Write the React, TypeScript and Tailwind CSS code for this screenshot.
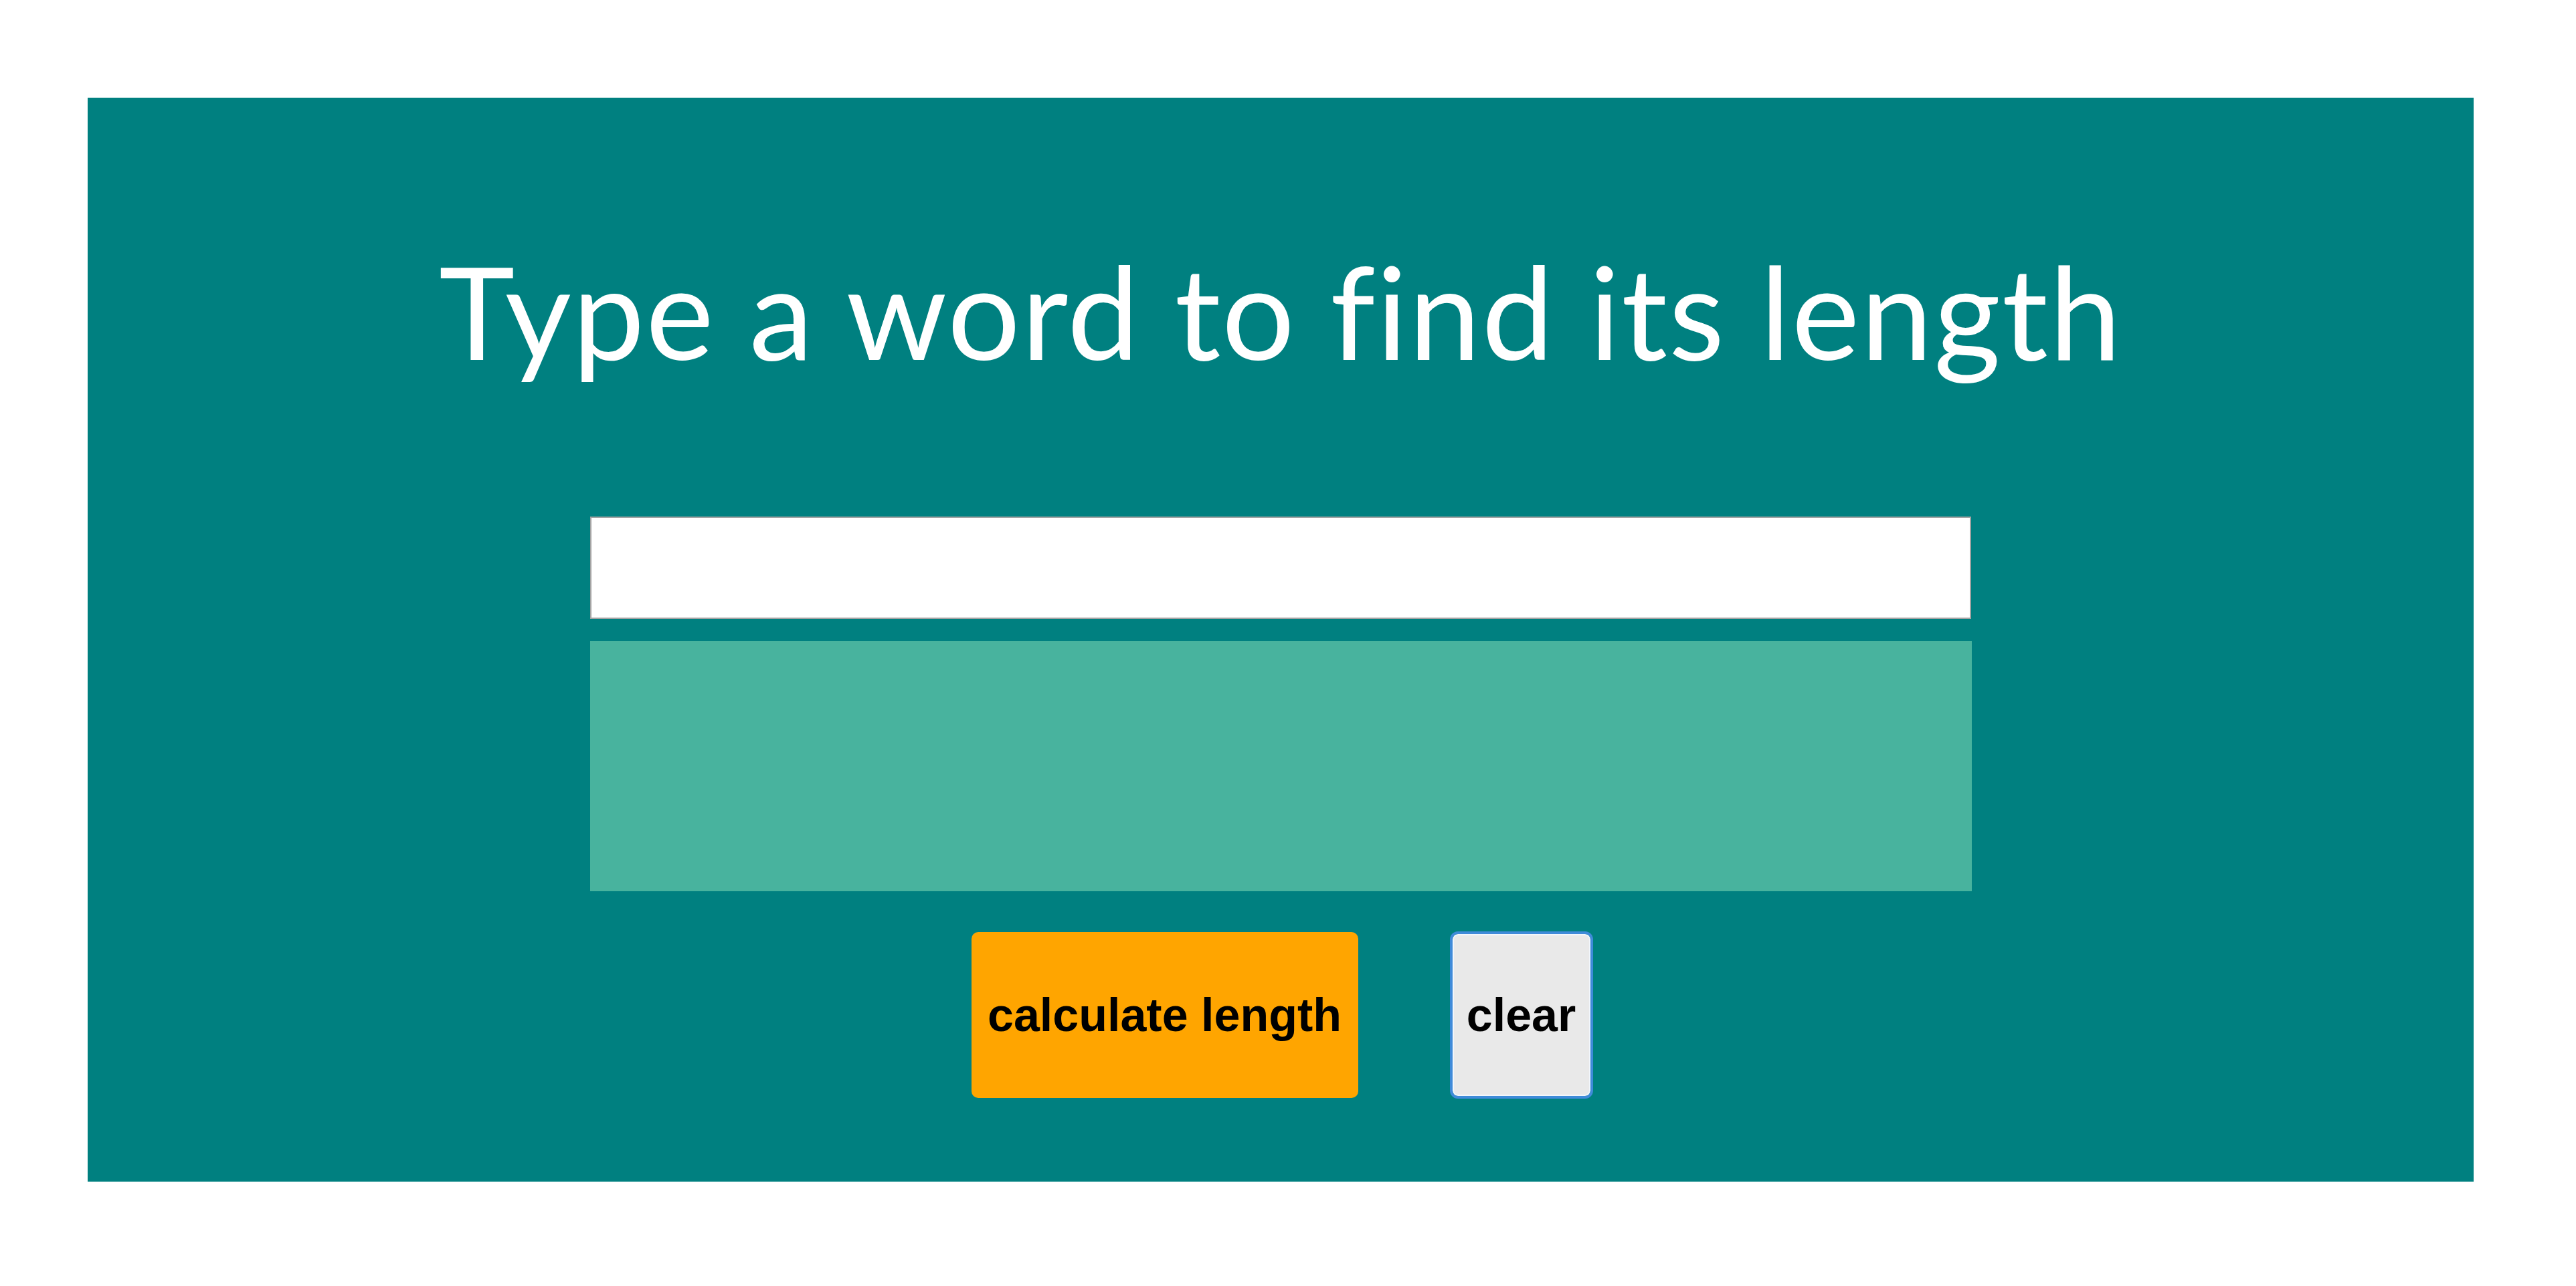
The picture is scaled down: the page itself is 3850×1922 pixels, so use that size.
export default function App() {
  return (
    <div className="min-h-screen bg-white pt-[146px] pl-[131px]">
      <div className="flex h-[1620px] w-[3566px] flex-col items-center bg-[#008080]">
        <h1 className="mt-[222px] font-['Lato',sans-serif] text-[192px] font-normal leading-none tracking-[2px] text-white">
          Type a word to find its length
        </h1>

        <input
          type="text"
          className="mt-[212px] h-[153px] w-[2064px] border-2 border-[#a3a3a3] bg-white outline-none"
        />
        <div className="mt-[33px] h-[374px] w-[2065px] bg-[#48b39e]" />

        <div className="mt-[61px] flex items-center gap-[141px] font-['Liberation_Sans',Arial,sans-serif] text-[70px] font-bold text-black">
          <button className="flex h-[248px] w-[578px] items-center justify-center rounded-[10px] bg-[#ffa500]">
            calculate length
          </button>
          <button className="flex h-[242px] w-[206px] items-center justify-center rounded-[8px] border-2 border-[#f2f6fb] bg-[#e9e9e9] outline-[4px] outline-[#3f8bd9] outline-solid">
            clear
          </button>
        </div>
      </div>
    </div>
  );
}
